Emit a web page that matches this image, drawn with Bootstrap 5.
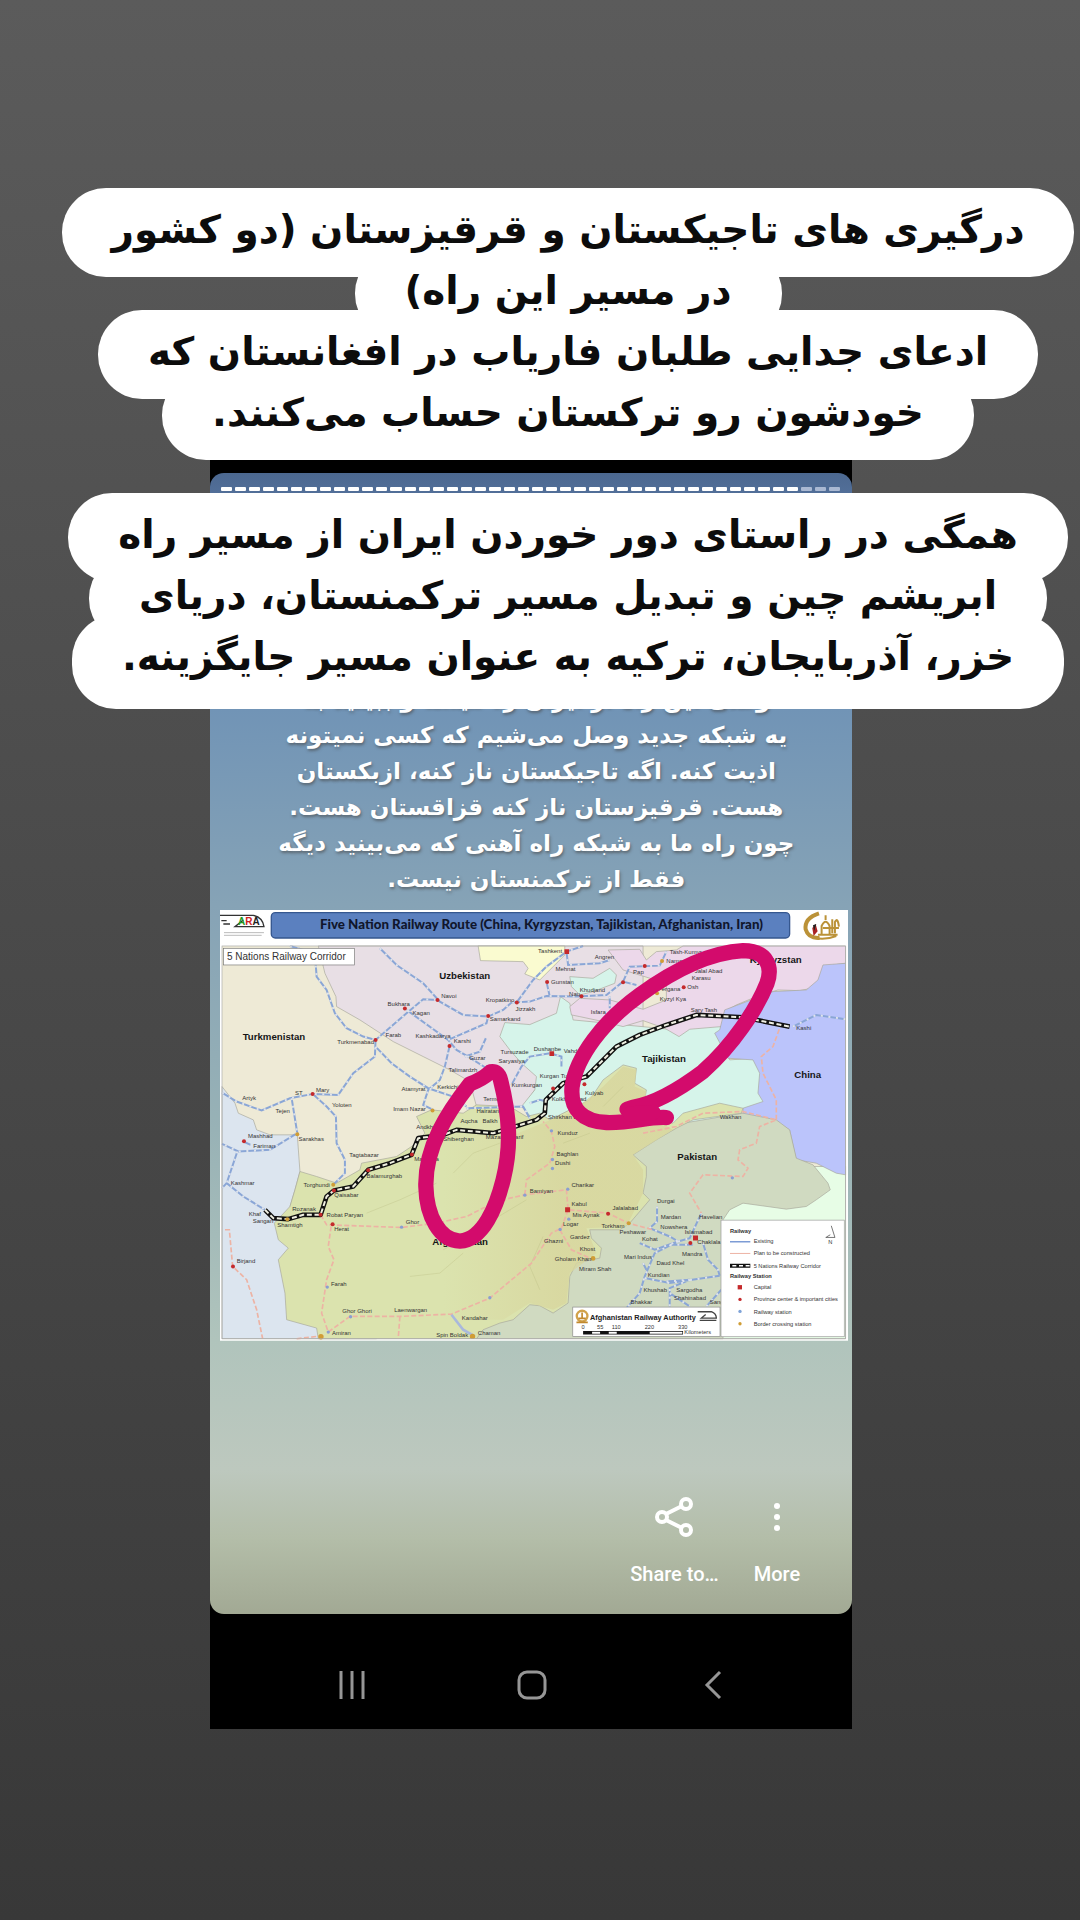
<!DOCTYPE html>
<html lang="fa">
<head>
<meta charset="utf-8">
<meta name="viewport" content="width=device-width, initial-scale=1">
<title>Story</title>
<link href="https://cdn.jsdelivr.net/npm/bootstrap@5.3.0/dist/css/bootstrap.min.css" rel="stylesheet">
<style>
body{background:linear-gradient(#5b5b5b,#4b4b4b 45%,#383838);font-family:"DejaVu Sans","Noto Sans",sans-serif}
.stage{min-height:100vh;padding-top:440px}
.phone{width:59.5%;margin-left:19.4%;background:#000;padding-top:33px}
.story{border-radius:14px;background:linear-gradient(#4c6890 0,#53709a 24px,#7194b6 236px,#86a3b6 432px,#98b2b6 657px,#b0c4bc 867px,#bdc8be 997px,#b3bda8 1067px,#a2a994 100%);padding:14px 4px 0 10px}
.segments{gap:3px;padding:0 8px 0 1px}
.segments i{flex:1;height:4px;background:#fff;border-radius:1px}
.segments i.rest{background:#a9b8d2}
.caption{color:#fff;font-weight:700;font-size:23px;line-height:36px;text-shadow:1px 2px 3px #4449;padding:190px 0 0 5px;white-space:nowrap}
.map-art{margin-top:13px}
.actions{padding:155px 48px 0 0;gap:35px;height:273px}
.actions button,.softkeys button{background:none;border:0;padding:0;color:#fff;font:500 20px/24px Roboto,sans-serif}
.actions button span{display:block;margin-top:24px}
.softkeys{height:115px;padding:27px 49px 0 52px}
.overlay-text{top:188px;left:56px;right:0;z-index:2}
.pill{background:#fff;color:#0c0c0c;border-radius:44px;height:89px;padding:0 50px;font-size:39px;font-weight:700;line-height:84px;white-space:nowrap}
.pill span{position:relative;z-index:1}
.pill + .pill{margin-top:-28px}
.pill.after-gap{margin-top:33px}
.pill.tall{height:94px}
</style>
</head>
<body>
<main class="stage position-relative overflow-hidden">
<section class="overlay-text position-absolute d-flex flex-column align-items-center" dir="rtl">
<div class="pill"><span>درگیری های تاجیکستان و قرقیزستان (دو کشور</span></div>
<div class="pill"><span>در مسیر این راه)</span></div>
<div class="pill"><span>ادعای جدایی طلبان فاریاب در افغانستان که</span></div>
<div class="pill"><span>خودشون رو ترکستان حساب می‌کنند.</span></div>
<div class="pill after-gap"><span>همگی در راستای دور خوردن ایران از مسیر راه</span></div>
<div class="pill"><span>ابریشم چین و تبدیل مسیر ترکمنستان، دریای</span></div>
<div class="pill tall"><span>خزر، آذربایجان، ترکیه به عنوان مسیر جایگزینه.</span></div>
</section>
<section class="phone">
<div class="story">
<div class="segments d-flex"><i></i><i></i><i></i><i></i><i></i><i></i><i></i><i></i><i></i><i></i><i></i><i></i><i></i><i></i><i></i><i></i><i></i><i></i><i></i><i></i><i></i><i></i><i></i><i></i><i></i><i></i><i></i><i></i><i></i><i></i><i></i><i></i><i></i><i></i><i></i><i></i><i></i><i></i><i></i><i></i><i></i><i class="rest"></i><i class="rest"></i><i class="rest"></i></div>
<div class="caption text-center" dir="rtl">وقتی این راه از ایران رد میشه و ببینید به<br>یه شبکه جدید وصل می‌شیم که کسی نمیتونه<br>اذیت کنه. اگه تاجیکستان ناز کنه، ازبکستان<br>هست. قرقیزستان ناز کنه قزاقستان هست.<br>چون راه ما به شبکه راه آهنی که می‌بینید دیگه<br>فقط از ترکمنستان نیست.</div>
<svg class="map-art d-block w-100" viewBox="30 30 1887 1293" font-family="Liberation Sans, sans-serif" font-size="18" fill="#333">
<rect x="30" y="30" width="1887" height="1293" fill="#fff"/>
<g fill="none" stroke="#333" stroke-width="4"><path d="M30 46H130Q158 52 162 80H75L100 60M34 62H50M40 72H60"/><path d="M42 98H162M42 106H155" stroke-width="2" stroke="#999"/></g>
<text x="84" y="76" font-weight="700" font-size="30"><tspan fill="#292">A</tspan><tspan fill="#c22">R</tspan><tspan fill="#222">A</tspan></text>
<rect x="184" y="38" width="1556" height="76" rx="12" fill="#5b80bf" stroke="#36578f" stroke-width="4"/>
<text x="995" y="86" text-anchor="middle" font-family="Lato, sans-serif" font-weight="900" font-size="40" fill="#10162c">Five Nation Railway Route (China, Kyrgyzstan, Tajikistan, Afghanistan, Iran)</text>
<g fill="none" stroke="#bb9238"><path stroke-width="12" d="M1828 40Q1784 54 1788 88Q1796 116 1830 114"/><path d="M1836 104V78Q1848 52 1860 78V104M1825 104H1884M1848 60V46M1876 100V66Q1884 50 1888 80M1840 84H1888M1815 114Q1850 120 1880 108M1868 58V100" stroke-width="6"/></g><path d="M1808 84L1818 72L1824 94L1812 108Z" fill="#a22"/><path d="M1810 76L1820 72 1814 92Z" fill="#222"/>
<!-- countries -->
<rect x="36" y="138" width="1872" height="1179" fill="#eeead6"/>
<g stroke="#a7a79c" stroke-width="2">
<path fill="#e8dfe5" d="M325 138L345 220 378 290 380 320 450 360 550 425 640 470 720 510 780 545 800 620H940L975 570 1300 480V138Z"/>
<path fill="#fafbd0" d="M805 138L812 182 940 185 955 205 945 222 990 240 1030 200 1065 165V138Z"/>
<path fill="#dce5ef" d="M36 560L75 610 85 640 130 660 140 690 180 705H262L270 815 255 870 240 920 500 1317H36Z"/>
<path fill="#e7fde6" d="M1500 800H1908V1317H1500Z"/>
<path fill="#d6f4ea" d="M885 368L960 374 1040 340 1052 290 1080 310 1090 360 1400 390 1530 370 1560 480 1630 475 1660 530 1658 600 1600 640 1400 690 990 680 935 620 975 570 980 530 935 490 900 450 870 410Z"/>
<path fill="#ecd8ea" d="M1195 150L1290 148 1310 180 1340 155 1400 150 1420 138H1908V190L1870 195 1850 220 1820 262 1770 272 1705 270 1640 290 1580 315 1545 335 1535 380 1440 388 1408 410 1365 385 1300 362 1240 380 1180 365 1110 350 1085 345 1080 320 1110 295 1200 300 1300 328 1370 300 1370 250 1240 210Z"/>
<path fill="#d6f4ea" d="M1080 230L1150 235 1200 205 1220 225 1215 250 1150 275 1110 285 1085 260Z"/>
<path fill="#d6f4ea" d="M1480 500H1660L1665 610 1590 650H1480Z" stroke="none"/>
<path fill="#bbc4fb" d="M1908 190L1840 195 1825 240 1790 270 1690 275 1545 330 1530 390 1515 400 1555 475 1630 480 1650 520 1645 580 1660 605 1600 625 1600 645 1700 665 1740 690 1760 780 1820 790 1880 820 1908 825Z"/>
<path fill="#d0dac1" d="M1300 720L1420 670 1600 640 1700 660 1740 690 1760 775 1810 795 1855 850 1862 870 1820 900 1790 920 1730 928 1600 910 1560 930 1540 960V1317H800L1040 960Z"/>
<path fill="#dbe3ae" d="M270 815L320 830 380 850 450 810 455 790 560 770 605 740 645 700 620 650 665 630 760 640 800 615 900 620 950 650 990 640 1020 660 1080 630 1140 600 1180 540 1240 495 1280 505 1275 550 1310 570 1300 630 1390 670 1420 640 1530 610 1600 625 1595 640 1450 660 1400 685 1340 720 1270 765 1310 800 1310 830 1300 880 1320 900 1260 970 1230 990H1140L1145 1015 1175 1045 1170 1075 1100 1090 1080 1130 1075 1210 1030 1240 990 1218 960 1215 910 1260 870 1270 820 1290 800 1317H325L320 1285 230 1260 225 1180 205 1080 235 1045 205 1020 193 970 240 920 255 870Z"/>
</g>
<linearGradient id="relief"><stop offset="0" stop-color="#d8d69e" stop-opacity="0"/><stop offset=".5" stop-color="#d8d69e" stop-opacity=".8"/></linearGradient>
<path fill="url(#relief)" d="M1180 560L1240 500 1280 510 1275 560 1310 575 1300 640 1390 690 1270 765 1300 810 1300 880 1250 980 1130 985 1160 1060 1080 1120 1070 1210 1030 1230 960 1210 880 1260H700V700L900 710 1010 665 1080 640Z"/>
<g fill="none" stroke="#b9bd83" stroke-width="3" opacity=".35"><path d="M700 1050L770 1010 850 960 950 900M600 1130L690 1120 760 1060M1000 1010L960 1100 990 1170M730 820L790 760 870 730M1180 620L1240 560M1060 730L1140 700M470 940L570 900 680 850"/></g>
<!-- rail network -->
<g fill="none"><g stroke="#8aa6d6" stroke-width="6"><path id="lines" d="M510 145L560 195 640 250 690 305 760 345 835 350 880 330 905 308 960 305 1010 288 1100 290 1190 285 1240 245 1260 200 1350 197 1370 155M920 308L970 240 1010 200 1070 155 1120 138M1010 245L1020 290M1070 155L1075 195 1170 190 1200 180M1240 245L1280 255M1200 290V325M240 138L315 160 320 230 350 270 375 340 410 385 460 410 497 420 590 340 640 298 683 300M590 330L715 420 740 450 775 470 830 505M715 420L830 370 835 350M765 470L810 455 828 415M720 435L705 500 690 540 655 570 640 615 670 630M497 420L495 470 430 520 385 585 310 582 240 595 155 632 80 605 36 578M497 440L545 490 600 530 655 565 730 590 770 620M245 595L262 700M308 582L350 620 378 650 380 730 405 780 405 820 370 855M262 700L180 750 85 755 36 732M82 755L50 850 100 890 165 930M100 725L122 735M36 865L50 850M905 555L935 500 960 470 1020 460 1055 470V500M960 610L990 600 1010 605M770 625L940 620 960 655M1342 920V965L1320 985 1380 1010 1405 1025 1335 1050 1290 1030M1405 1025L1335 1060 1305 1130 1290 1180 1250 1225M1405 1025L1440 1015 1475 940M1305 1135L1380 1150 1530 1128M1370 1145L1440 1140 1380 1165V1220M1480 1030L1495 1080 1525 1110 1530 1128M1300 1090L1310 1110M1490 1220L1535 1170M1380 1180L1440 1220M1380 1035H1450M1750 380L1820 345 1908 358"/></g>
<use href="#lines" stroke="#dfe3ea" stroke-width="6" stroke-dasharray="6 17"/></g>
<g fill="none" stroke="#edb3a4" stroke-width="5" stroke-dasharray="15 7">
<path d="M332 945L350 975 575 983 680 970 770 950 820 925 900 895 945 885 1070 870 1075 930 1195 940 1255 970 1330 990M945 885L950 840 1020 790 1035 740 1025 695 1000 665M1075 930L1055 985 1025 1000 965 1090 840 1195 725 1243 570 1250 420 1250 355 1297 335 1240 350 1140 372 1080 355 1040 365 970M570 1250L565 1317M45 990H58L68 1100 110 1140 140 1230 158 1317M1050 990L1085 1050 1140 1075M260 1317L340 1308M1300 700L1400 680 1480 640 1600 635 1700 660 1650 680 1640 730 1590 750 1585 780 1615 805 1600 830 1480 825 1440 880 1475 940M1700 660L1700 600 1660 520 1655 470 1690 440 1710 385"/></g>
<path d="M725 1245L760 1290 795 1310" fill="none" stroke="#a9b8dc" stroke-width="8"/>
<g fill="none" stroke-linejoin="round"><path stroke="#111" stroke-width="14" d="M165 930L190 955 235 958 280 945 332 945 350 890 372 872 430 860 475 810 540 790 605 765 625 715 700 705 740 690 850 700 900 685 980 660 1005 640 1008 600 1060 550 1130 530 1160 500 1220 440 1290 405 1370 375 1460 345 1600 352 1740 380"/><path stroke="#f0f0e2" stroke-width="6" stroke-dasharray="15 8" d="M165 930L190 955 235 958 280 945 332 945 350 890 372 872 430 860 475 810 540 790 605 765 625 715 700 705 740 690 850 700 900 685 980 660 1005 640 1008 600 1060 550 1130 530 1160 500 1220 440 1290 405 1370 375 1460 345 1600 352 1740 380"/></g>
<g fill="#c52a2c"><circle cx="683" cy="300" r="6"/><circle cx="585" cy="326" r="6"/><circle cx="497" cy="420" r="6"/><circle cx="308" cy="582" r="6"/><circle cx="835" cy="348" r="6"/><circle cx="921" cy="308" r="6"/><circle cx="719" cy="438" r="6"/><circle cx="1012" cy="246" r="6"/><circle cx="1115" cy="289" r="6"/><circle cx="1240" cy="247" r="6"/><circle cx="1305" cy="198" r="6"/><circle cx="1422" cy="262" r="6"/><circle cx="102" cy="724" r="6"/><circle cx="368" cy="973" r="6"/><circle cx="69" cy="1100" r="6"/><circle cx="1195" cy="942" r="6"/><circle cx="1442" cy="1030" r="6"/><circle cx="475" cy="811" r="6"/><circle cx="372" cy="872" r="6"/><circle cx="332" cy="945" r="6"/><circle cx="606" cy="764" r="6"/><circle cx="1030" cy="566" r="6"/><circle cx="1124" cy="553" r="6"/><path d="M1064 148h14v14h-14zM1019 454h14v14h-14zM1066 922h15v15h-15zM1450 1007h15v15h-15z"/></g>
<g fill="#d09d35"><circle cx="262" cy="703" r="6"/><circle cx="370" cy="855" r="6"/><circle cx="232" cy="958" r="6"/><circle cx="668" cy="632" r="6"/><circle cx="1150" cy="1076" r="7"/><circle cx="1257" cy="970" r="6"/><circle cx="788" cy="1310" r="8"/><circle cx="333" cy="1311" r="8"/><circle cx="1357" cy="183" r="6"/><circle cx="1342" cy="280" r="6"/></g>
<g fill="#8a9fd0"><circle cx="575" cy="982" r="5"/><circle cx="352" cy="1162" r="5"/><circle cx="355" cy="1297" r="5"/><circle cx="422" cy="1251" r="5"/><circle cx="840" cy="1194" r="5"/><circle cx="945" cy="886" r="5"/><circle cx="1074" cy="868" r="5"/><circle cx="1028" cy="779" r="5"/><circle cx="1028" cy="806" r="5"/><circle cx="1025" cy="693" r="5"/><circle cx="1568" cy="834" r="5"/><circle cx="1077" cy="958" r="5"/><circle cx="1051" cy="989" r="5"/></g>
<g><text x="694" y="293">Navoi</text><text x="533" y="318">Bukhara</text><text x="608" y="344">Kagan</text><text x="828" y="305">Kropatkino</text><text x="917" y="332">Jizzakh</text><text x="840" y="364">Samarkand</text><text x="527" y="410">Farab</text><text x="382" y="432">Turkmenabad</text><text x="617" y="414">Kashkadarya</text><text x="732" y="430">Karshi</text><text x="778" y="481">Guzar</text><text x="872" y="462">Tursuzade</text><text x="866" y="490">Saryasiya</text><text x="716" y="516">Talimardzh</text><text x="575" y="572">Atamyrat</text><text x="682" y="568">Kerkichi</text><text x="905" y="562">Kumkurgan</text><text x="318" y="576">Mary</text><text x="255" y="584">ST</text><text x="97" y="600">Artyk</text><text x="197" y="638">Tejen</text><text x="366" y="620">Yoloten</text><text x="550" y="634">Imam Nazar</text><text x="820" y="604">Termez</text><text x="800" y="640">Hairatan</text><text x="752" y="669">Aqcha</text><text x="818" y="669">Balkh</text><text x="619" y="686">Andkhoy</text><text x="700" y="724">Shiberghan</text><text x="828" y="718">Mazar-i-Sharif</text><text x="114" y="714">Mashhad</text><text x="130" y="744">Fariman</text><text x="266" y="722">Sarakhas</text><text x="418" y="773">Tagtabazar</text><text x="613" y="785">Maimana</text><text x="470" y="834">Balamurghab</text><text x="281" y="862">Torghundi</text><text x="373" y="892">Qaisabar</text><text x="62" y="857">Kashmar</text><text x="247" y="933">Rozanak</text><text x="116" y="949">Khaf</text><text x="128" y="971">Sangan</text><text x="202" y="981">Shamtigh</text><text x="350" y="953">Robat Paryan</text><text x="373" y="993">Herat</text><text x="588" y="974">Ghor</text><text x="80" y="1090">Birjand</text><text x="363" y="1159">Farah</text><text x="397" y="1239">Ghor Ghori</text><text x="553" y="1236">Laenwargan</text><text x="756" y="1262">Kandahar</text><text x="679" y="1311">Spin Boldak</text><text x="804" y="1307">Chaman</text><text x="366" y="1307">Amiran</text>
<text x="985" y="159">Tashkent</text><text x="1155" y="176">Angren</text><text x="1037" y="214">Mehnat</text><text x="1024" y="253">Gunstan</text><text x="1110" y="275">Khudjand</text><text x="1078" y="287">Nau</text><text x="1270" y="222">Pap</text><text x="1380" y="161">Tash-Kumyr</text><text x="1370" y="190">Namangan</text><text x="1455" y="218">Jalal Abad</text><text x="1446" y="240">Karasu</text><text x="1433" y="268">Osh</text><text x="1345" y="274">Fergana</text><text x="1350" y="302">Kyzyl Kya</text><text x="1143" y="341">Isfara</text><text x="1443" y="337">Sary Tash</text><text x="1760" y="391">Kashi</text><text x="972" y="452">Dushanbe</text><text x="1062" y="460">Vahdat</text><text x="990" y="534">Kurgan Tube</text><text x="1126" y="584">Kulyab</text><text x="1026" y="604">Kolkhozabad</text><text x="1015" y="658">Shirkhan Bandar</text><text x="1530" y="657">Wakhan</text>
<text x="1043" y="706">Kunduz</text><text x="1040" y="770">Baghlan</text><text x="1036" y="797">Dushi</text><text x="1085" y="861">Charikar</text><text x="960" y="880">Bamiyan</text><text x="1085" y="920">Kabul</text><text x="1208" y="932">Jalalabad</text><text x="1088" y="951">Mis Aynak</text><text x="1060" y="979">Logar</text><text x="1175" y="984">Torkham</text><text x="1081" y="1018">Gardez</text><text x="1003" y="1030">Ghazni</text><text x="1110" y="1053">Khost</text><text x="1035" y="1084">Gholam Khan</text><text x="1108" y="1113">Miram Shah</text><text x="1342" y="909">Durgai</text><text x="1353" y="959">Mardan</text><text x="1352" y="987">Nowshera</text><text x="1229" y="1004">Peshawar</text><text x="1297" y="1025">Kohat</text><text x="1468" y="957">Havelian</text><text x="1425" y="1004">Islamabad</text><text x="1463" y="1034">Chaklala</text><text x="1243" y="1079">Mari Indus</text><text x="1417" y="1070">Mandra</text><text x="1340" y="1096">Daud Khel</text><text x="1314" y="1131">Kundian</text><text x="1301" y="1176">Khushab</text><text x="1400" y="1176">Sargodha</text><text x="1393" y="1200">Shahinabad</text><text x="1262" y="1214">Bhakkar</text><text x="1500" y="1214">Sangla</text></g>
<g font-size="29" font-weight="700" fill="#161616"><text x="98" y="421">Turkmenistan</text><text x="688" y="238">Uzbekistan</text><text x="1297" y="485">Tajikistan</text><text x="1620" y="190">Kyrgyzstan</text><text x="1754" y="534">China</text><text x="1403" y="782">Pakistan</text><text x="667" y="1036">Afghanistan</text></g>
<rect x="41" y="145" width="393" height="50" fill="#fff" stroke="#777" stroke-width="2"/><text x="51" y="181" font-size="30">5 Nations Railway Corridor</text>
<rect x="1534" y="961" width="370" height="350" fill="#fff" stroke="#999" stroke-width="2"/>
<g font-size="17"><text x="1561" y="999" font-weight="700">Railway</text><text x="1632" y="1031">Existing</text><text x="1632" y="1067">Plan to be constructed</text><text x="1632" y="1104">5 Nations Railway Corridor</text><text x="1561" y="1136" font-weight="700">Railway Station</text><text x="1632" y="1168">Capital</text><text x="1632" y="1205">Province center &amp; important cities</text><text x="1632" y="1242">Railway station</text><text x="1632" y="1278">Border crossing station</text><text x="1856" y="1032">N</text></g>
<path d="M1561 1026H1622" stroke="#6c8fd0" stroke-width="4"/><path d="M1561 1061H1622" stroke="#edb3a4" stroke-width="3"/><path d="M1561 1098H1622" stroke="#111" stroke-width="12"/><path d="M1568 1098H1622" stroke="#fff" stroke-width="4" stroke-dasharray="12 8"/><path d="M1848 1013H1876L1865 978M1850 1012L1862 1005" stroke="#333" stroke-width="2" fill="none"/>
<path d="M1584 1156h13v13h-13z" fill="#c52a2c"/><circle cx="1591" cy="1199" r="5" fill="#c52a2c"/><circle cx="1591" cy="1235" r="5" fill="#7fa3d8"/><circle cx="1591" cy="1272" r="5" fill="#d09d35"/>
<rect x="1089" y="1222" width="442" height="88" fill="#fff" stroke="#888" stroke-width="2"/>
<circle cx="1117" cy="1249" r="16" fill="none" stroke="#d2a34c" stroke-width="7"/><path d="M1106 1256H1128M1117 1238V1256M1100 1268H1134" stroke="#c1892e" stroke-width="5"/>
<text x="1141" y="1260" font-size="22" font-weight="700" fill="#222">Afghanistan Railway Authority</text><path d="M1464 1236H1505Q1520 1242 1520 1255H1475L1488 1244M1470 1262H1520" stroke="#444" stroke-width="4" fill="none"/>
<g font-size="17"><text x="1115" y="1288">0</text><text x="1162" y="1288">55</text><text x="1206" y="1288">110</text><text x="1305" y="1288">220</text><text x="1405" y="1288">330</text><text x="1424" y="1302">Kilometers</text></g><path d="M1120 1299H1420" stroke="#111" stroke-width="10"/><path d="M1147 1299h24M1197 1299h24M1320 1299h98" stroke="#fff" stroke-width="6"/>
<rect x="36" y="138" width="1872" height="1179" fill="none" stroke="#aaa" stroke-width="2"/>
<g fill="none" stroke="#d30b6c" stroke-width="46" stroke-linecap="round" stroke-linejoin="round"><path d="M842 516Q815 540 780 552C715 635 645 740 648 860C650 950 690 1022 750 1024C820 1020 860 920 880 840C905 740 900 650 872 540Q865 512 842 516"/><path d="M1252 628L1270 622C1340 610 1420 560 1480 515C1570 435 1640 330 1672 250C1690 200 1672 152 1600 152C1500 158 1400 205 1290 285C1180 365 1100 470 1087 560C1080 630 1120 665 1190 668C1270 670 1310 650 1370 653"/><path d="M1262 642L1330 638"/></g>
</svg>
<div class="actions d-flex justify-content-end align-items-start">
<button type="button"><svg class="d-block mx-auto" width="40" height="42" viewBox="0 0 40 42" fill="none" stroke="#fff" stroke-width="4"><path d="M12 18L28 10M12 24L28 32"/><circle cx="8" cy="21" r="5"/><circle cx="32" cy="8" r="5"/><circle cx="32" cy="34" r="5"/></svg><span>Share to…</span></button>
<button type="button"><svg class="d-block mx-auto" width="12" height="42" viewBox="0 0 12 42" fill="#fff"><circle cx="6" cy="10" r="3"/><circle cx="6" cy="21" r="3"/><circle cx="6" cy="32" r="3"/></svg><span>More</span></button>
</div>
</div>
<nav class="softkeys d-flex justify-content-around" aria-label="System">
<button type="button" aria-label="Recents"><svg width="32" height="32" viewBox="0 0 32 32" fill="none" stroke="#969696" stroke-width="3"><path d="M5 2V30M16 2V30M27 2V30"/></svg></button>
<button type="button" aria-label="Home"><svg width="32" height="32" viewBox="0 0 32 32" fill="none" stroke="#969696" stroke-width="3"><rect x="3" y="3" width="26" height="26" rx="8"/></svg></button>
<button type="button" aria-label="Back"><svg width="32" height="32" viewBox="0 0 32 32" fill="none" stroke="#969696" stroke-width="3"><path d="M23 3L10 16L23 29"/></svg></button>
</nav>
</section>
</main>
<script src="https://cdn.jsdelivr.net/npm/bootstrap@5.3.0/dist/js/bootstrap.bundle.min.js"></script>
</body>
</html>
